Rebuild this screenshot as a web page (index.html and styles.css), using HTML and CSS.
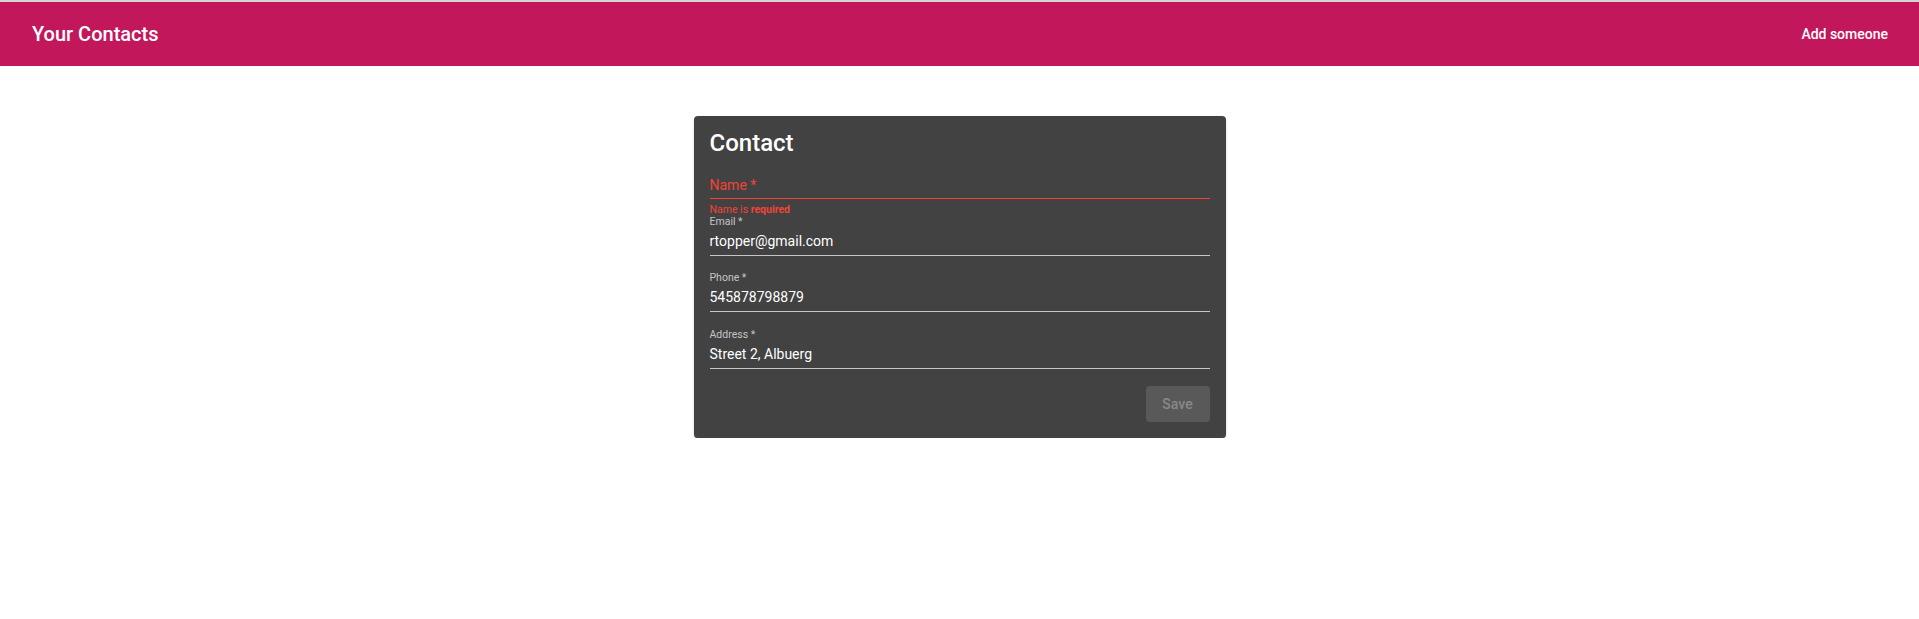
FILE: index.html
```html
<!DOCTYPE html>
<html lang="en">
<head>
<meta charset="utf-8">
<title>Your Contacts</title>
<link rel="stylesheet" href="styles.css">
</head>
<body>
<header class="toolbar">
  <span class="app-title">Your Contacts</span>
  <span class="nav-btn">Add someone</span>
</header>
<main class="page">
  <section class="card">
    <h2 class="card-title">Contact</h2>
    <form class="form">
      <div class="field field-invalid">
        <div class="infix">
          <div class="label-empty"></div>
          <div class="value placeholder">Name *</div>
        </div>
        <div class="sub"><div class="error">Name is <strong>required</strong></div></div>
      </div>
      <div class="field">
        <div class="infix">
          <div class="label">Email *</div>
          <div class="value">rtopper@gmail.com</div>
        </div>
        <div class="sub"></div>
      </div>
      <div class="field">
        <div class="infix">
          <div class="label">Phone *</div>
          <div class="value">545878798879</div>
        </div>
        <div class="sub"></div>
      </div>
      <div class="field">
        <div class="infix">
          <div class="label">Address *</div>
          <div class="value">Street 2, Albuerg</div>
        </div>
        <div class="sub"></div>
      </div>
      <div class="actions">
        <button type="button" class="btn-save" disabled>Save</button>
      </div>
    </form>
  </section>
</main>
</body>
</html>
```
FILE: styles.css
```css
html, body {
  margin: 0;
  padding: 0;
  background: #ffffff;
  font-family: Roboto, "Liberation Sans", sans-serif;
}

.toolbar {
  border-top: 2px solid #d4d4d4;
  height: 64px;
  background: #c2185b;
  color: #ffffff;
  display: flex;
  align-items: center;
  justify-content: space-between;
  padding: 0 15px 0 16px;
}

.app-title {
  font-size: 20px;
  font-weight: 500;
  padding-left: 16px;
}

.nav-btn {
  font-size: 14px;
  font-weight: 500;
  padding: 0 16px;
  line-height: 36px;
}

.page {
  display: flex;
  justify-content: center;
  padding-top: 50px;
}

.card {
  width: 500px;
  padding: 16px 16px 16px 16px;
  background: #424242;
  border-radius: 4px;
  color: #ffffff;
  box-shadow: 0 2px 1px -1px rgba(0,0,0,.2), 0 1px 1px 0 rgba(0,0,0,.14), 0 1px 3px 0 rgba(0,0,0,.12);
}

.card-title {
  margin: 0 0 4px 0;
  font-size: 24px;
  line-height: 22px;
  font-weight: 500;
}

.form {
  margin: 0;
}

.field {
  font-size: 14px;
}

.infix {
  padding: 1px 0 6px 0;
  border-bottom: 1px solid rgba(255,255,255,0.7);
}

.label, .label-empty {
  height: 12px;
  font-size: 10.5px;
  line-height: 12px;
  color: rgba(255,255,255,0.7);
}

.value {
  margin-top: 5px;
  font-size: 14px;
  line-height: 16px;
  color: #ffffff;
}

.field-invalid .infix {
  border-bottom-color: #f44336;
}

.value.placeholder {
  margin-top: 7px;
  line-height: 14px;
  color: #f44336;
}

.sub {
  height: 15.67px;
}

.error {
  padding-top: 5px;
  font-size: 10.5px;
  line-height: 11px;
  color: #f44336;
}

.error strong {
  font-weight: 700;
}

.actions {
  display: flex;
  justify-content: flex-end;
  padding-top: 1px;
}

.btn-save {
  min-width: 64px;
  height: 36px;
  padding: 0 16px;
  border: none;
  border-radius: 4px;
  background: rgba(255,255,255,0.12);
  color: rgba(255,255,255,0.3);
  font-family: Roboto, "Liberation Sans", sans-serif;
  font-size: 14px;
  font-weight: 500;
}
```
